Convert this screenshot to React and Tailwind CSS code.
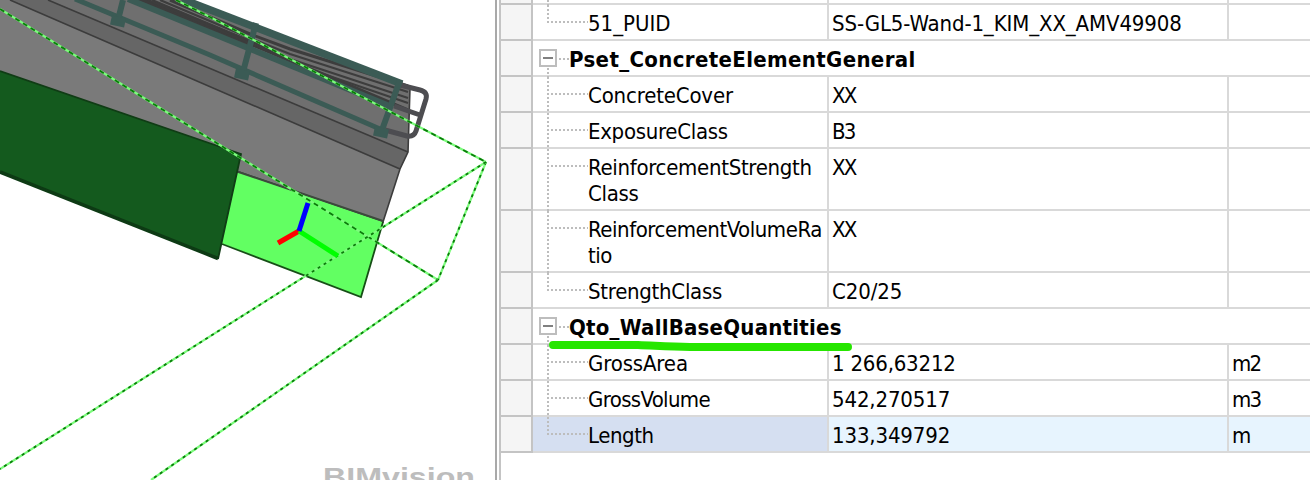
const ROWS = [
  { label: '51_PUID', value: 'SS-GL5-Wand-1_KIM_XX_AMV49908', unit: '', last: true, labelTrack: 'tracking-[-0.02px]', valueTrack: 'tracking-[-0.12px]' },
  { group: 'Pset_ConcreteElementGeneral', labelTrack: 'tracking-[0.35px]' },
  { label: 'ConcreteCover', value: 'XX', unit: '', labelTrack: 'tracking-[-0.17px]', valueTrack: 'tracking-[-1.8px]' },
  { label: 'ExposureClass', value: 'B3', unit: '', labelTrack: 'tracking-[-0.3px]', valueTrack: 'tracking-[-1.8px]' },
  { label: 'ReinforcementStrength', label2: 'Class', value: 'XX', unit: '', labelTrack: 'tracking-[-0.3px]', valueTrack: 'tracking-[-1.8px]' },
  { label: 'ReinforcementVolumeRa', label2: 'tio', value: 'XX', unit: '', labelTrack: 'tracking-[-0.45px]', valueTrack: 'tracking-[-1.8px]' },
  { label: 'StrengthClass', value: 'C20/25', unit: '', last: true, labelTrack: 'tracking-[-0.28px]', valueTrack: 'tracking-[-0.1px]' },
  { group: 'Qto_WallBaseQuantities', labelTrack: 'tracking-[0.24px]' },
  { label: 'GrossArea', value: '1 266,63212', unit: 'm2', labelTrack: 'tracking-[-0.15px]', valueTrack: 'tracking-[-0.2px]' },
  { label: 'GrossVolume', value: '542,270517', unit: 'm3', labelTrack: 'tracking-[-0.65px]', valueTrack: 'tracking-[-0.15px]' },
  { label: 'Length', value: '133,349792', unit: 'm', last: true, selected: true, labelTrack: 'tracking-[-0.45px]', valueTrack: 'tracking-[-0.15px]' },
];

const BOX = [
  { d: 'M0 9L438 280', dash: '5 4' },
  { d: 'M176 0L210 17L486 162', dash: '5 4' },
  { d: 'M486 162L438 280', dash: '3 4' },
  { d: 'M486 162L0 469', dash: '3 4' },
  { d: 'M438 280L151 480', dash: '3 4' },
];

function Scene() {
  return (
    <svg width="495" height="480" viewBox="0 0 495 480" className="block shrink-0">
      <path d="M0 0H190L402 82L410 88L408 152L400 169L383 222L239 172L0 90Z" fill="#7a7a7a" />
      <path d="M10 0H190L410 88L408 152L400 169Z" fill="#666" />
      <path d="M48 0H190L410 88L408 152Z" fill="#6f6f6f" />
      <path d="M10 0L400 169M48 0L408 152" stroke="#3c3c3c" strokeWidth="1.6" />
      <path d="M410 88L408 152L400 169L383 222L239 172" fill="none" stroke="#3c3c3c" strokeWidth="1.6" />
      <g fill="none" stroke="#3d3d3d" strokeWidth="2.2">
        <path d="M136 -1L250 44" strokeWidth="8" />
        <path d="M250 44L330 77L408 110" strokeWidth="3" />
        <path d="M170 0L250 34L290 49L408 86" strokeWidth="3" />
        <path d="M160 0L250 38L290 54L408 92" />
        <path d="M152 0L250 41L290 59L408 98" />
        <path d="M148 0L250 43L300 66L408 103" />
      </g>
      <path d="M400 85L420 90Q428 92 426 99L416 131Q414 137 407 136L385 130M394 106L420 115" fill="none" stroke="#4d4d51" strokeWidth="5" />
      <g fill="none" stroke="#3b5b55" strokeWidth="6">
        <path d="M182 -1L402 84" strokeWidth="7.5" />
        <path d="M128 -1L392 107" />
        <path d="M75 -1L210 55L380 129" strokeWidth="5" />
        <path d="M123 0L118 20M256 23L243 72M400 80L382 130" />
        <path d="M111 20L125 23M235 73L249 76M374 131L388 134" strokeWidth="9" />
      </g>
      <path d="M234 171L383 222L361 297L218 242Z" fill="#62ff62" />
      <path d="M237 171.500L383 221" stroke="#3c4a3c" strokeWidth="2" />
      <path d="M383 222L361 297L222 244" fill="none" stroke="#164f16" strokeWidth="1.8" />
      <path d="M0 71L241 154L218 259L0 172Z" fill="#145a1e" />
      <path d="M0 71L241 154L218 259" fill="none" stroke="#103c15" strokeWidth="1.8" />
      <path d="M0 172L218 258.500" stroke="#0d3a14" strokeWidth="3.500" />
      {BOX.map(({ d, dash }) => (
        <g key={d} fill="none">
          <path d={d} stroke="#7cfc7c" strokeWidth="2.2" />
          <path d={d} stroke="#0a7c0a" strokeWidth="1.8" strokeDasharray={dash} />
        </g>
      ))}
      <g strokeWidth="5">
        <path d="M299 231L278 243" stroke="#f00" />
        <path d="M299 231L338 256" stroke="#0f0" />
        <path d="M299 231L308 203" stroke="#00f" />
      </g>
      <text x="323" y="486" fill="#bdbdbd" fontSize="26" fontWeight="700" fontFamily="Liberation Sans, sans-serif" textLength="152" lengthAdjust="spacingAndGlyphs">BIMvision</text>
    </svg>
  );
}

function Tree({ row, tall }) {
  const h = tall ? 62 : 36;
  return (
    <svg width="56" height={h} viewBox={`0 0 56 ${h}`} className="-mb-0.5 block shrink-0" fill="none" strokeWidth="2">
      {row.group ? (
        <>
          <path d="M26 18H37M15 27V36" stroke="#bdbdbd" strokeDasharray="2 2" />
          <rect x="7" y="9" width="16" height="16" stroke="#bdbdbd" />
          <path d="M10 17H20" stroke="#808080" />
        </>
      ) : (
        <path d={row.last ? 'M15 0V18M14 17H55' : `M15 0V${h}M14 17H55`} stroke="#bdbdbd" strokeDasharray="2 2" />
      )}
    </svg>
  );
}

function Row({ row }) {
  const tall = Boolean(row.label2);
  const height = tall ? 'h-[62px]' : 'h-9';
  return (
    <div className={`flex ${height}`}>
      <div className="w-8 shrink-0 border-r-2 border-b-2 border-[#c4c4c4] bg-[#f5f5f5]" />
      {row.group ? (
        <div className="flex flex-1 border-b-2 border-[#d9d9d9]">
          <Tree row={row} />
          <div className={`-ml-5 pt-1.5 font-bold whitespace-pre ${row.labelTrack}`}>{row.group}</div>
        </div>
      ) : (
        <>
          <div className={`flex w-[296px] shrink-0 border-r-2 border-b-2 border-[#d9d9d9] ${row.selected ? 'bg-[#d5dff1]' : ''}`}>
            <Tree row={row} tall={tall} />
            <div className={`-ml-px pt-1.5 whitespace-pre ${row.labelTrack}`}>
              <div>{row.label}</div>
              {tall && <div>{row.label2}</div>}
            </div>
          </div>
          <div className={`w-[400px] shrink-0 border-r-2 border-b-2 border-[#d9d9d9] pt-1.5 pl-[3px] whitespace-pre ${row.valueTrack} ${row.selected ? 'bg-[#e7f4fe]' : ''}`}>{row.value}</div>
          <div className={`flex-1 border-b-2 border-[#d9d9d9] pt-1.5 pl-[3px] tracking-[-1.8px] ${row.selected ? 'bg-[#e7f4fe]' : ''}`}>{row.unit}</div>
        </>
      )}
    </div>
  );
}

export default function App() {
  return (
    <div className="relative flex h-[480px] w-[1310px] overflow-hidden bg-white font-['DejaVu_Sans_Condensed','Noto_Sans',sans-serif] text-[22px] leading-[26px] text-black">
      <Scene />
      <div className="w-1.5 shrink-0 border-r-2 border-l-2 border-r-[#c4c4c4] border-l-[#a9a9a9]" />
      <div className="flex min-w-0 flex-1 flex-col">
        <div className="flex h-[5px] shrink-0">
          <div className="w-8 border-r-2 border-b-2 border-[#c4c4c4] bg-[#f5f5f5]" />
          <div className="flex w-[296px] border-r-2 border-b-2 border-[#d9d9d9]">
            <svg width="56" height="5" className="shrink-0">
              <path d="M15 0V5" stroke="#bdbdbd" strokeWidth="2" strokeDasharray="2 2" />
            </svg>
          </div>
          <div className="w-[400px] border-r-2 border-b-2 border-[#d9d9d9]" />
          <div className="flex-1 border-b-2 border-[#d9d9d9]" />
        </div>
        {ROWS.map((row) => (
          <Row key={row.label || row.group} row={row} />
        ))}
      </div>
      <svg width="310" height="20" viewBox="545 335 310 20" className="absolute top-[335px] left-[545px]">
        <path d="M553 345H638C660 346 670 347 690 347H848" fill="none" stroke="#26e600" strokeWidth="8" strokeLinecap="round" />
      </svg>
    </div>
  );
}
